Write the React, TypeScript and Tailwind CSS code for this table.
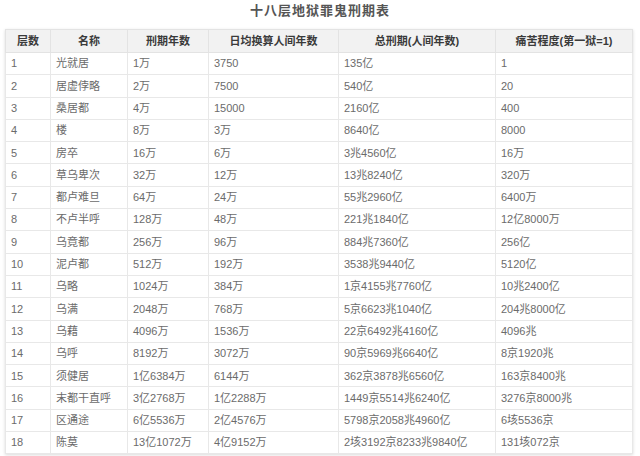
const rows: [string, string, string, string, string, string][] = [
  ["1", "光就居", "1万", "3750", "135亿", "1"],
  ["2", "居虚侼略", "2万", "7500", "540亿", "20"],
  ["3", "桑居都", "4万", "15000", "2160亿", "400"],
  ["4", "楼", "8万", "3万", "8640亿", "8000"],
  ["5", "房卒", "16万", "6万", "3兆4560亿", "16万"],
  ["6", "草乌卑次", "32万", "12万", "13兆8240亿", "320万"],
  ["7", "都卢难旦", "64万", "24万", "55兆2960亿", "6400万"],
  ["8", "不卢半呼", "128万", "48万", "221兆1840亿", "12亿8000万"],
  ["9", "乌竟都", "256万", "96万", "884兆7360亿", "256亿"],
  ["10", "泥卢都", "512万", "192万", "3538兆9440亿", "5120亿"],
  ["11", "乌略", "1024万", "384万", "1京4155兆7760亿", "10兆2400亿"],
  ["12", "乌满", "2048万", "768万", "5京6623兆1040亿", "204兆8000亿"],
  ["13", "乌藉", "4096万", "1536万", "22京6492兆4160亿", "4096兆"],
  ["14", "乌呼", "8192万", "3072万", "90京5969兆6640亿", "8京1920兆"],
  ["15", "须健居", "1亿6384万", "6144万", "362京3878兆6560亿", "163京8400兆"],
  ["16", "末都干直呼", "3亿2768万", "1亿2288万", "1449京5514兆6240亿", "3276京8000兆"],
  ["17", "区通途", "6亿5536万", "2亿4576万", "5798京2058兆4960亿", "6垓5536京"],
  ["18", "陈莫", "13亿1072万", "4亿9152万", "2垓3192京8233兆9840亿", "131垓072京"],
];

const headers = ["层数", "名称", "刑期年数", "日均换算人间年数", "总刑期(人间年数)", "痛苦程度(第一狱=1)"];
const widths = ["w-[45px]", "w-[77px]", "w-[81px]", "w-[130px]", "w-[157px]", "w-[137px]"];

export default function App() {
  return (
    <div
      className="w-[640px] h-[456px] overflow-hidden bg-white"
      style={{ fontFamily: '"Liberation Sans", "Noto Sans CJK SC", sans-serif' }}
    >
      <h1 className="h-[29px] pt-[2px] text-center text-[13px] leading-[18px] font-semibold text-[#555] tracking-[1px]">
        十八层地狱罪鬼刑期表
      </h1>
      <div className="ml-[5px] w-[628px] shadow-[0_1px_3px_rgba(0,0,0,0.15)]">
        <table className="w-full table-fixed border-collapse text-[11px] text-[#6b6b6b]">
          <thead>
            <tr className="h-[23px] bg-[#f2f2f2]">
              {headers.map((h, i) => (
                <th
                  key={h}
                  className={`${widths[i]} border border-[#e3e3e3] font-bold text-[#3a3a3a] text-center`}
                >
                  {h}
                </th>
              ))}
            </tr>
          </thead>
          <tbody>
            {rows.map((r) => (
              <tr key={r[0]} className="h-[22.3px]">
                {r.map((c, i) => (
                  <td key={i} className="border border-[#e8e8e8] pl-[5px] whitespace-nowrap">
                    {c}
                  </td>
                ))}
              </tr>
            ))}
          </tbody>
        </table>
      </div>
    </div>
  );
}
